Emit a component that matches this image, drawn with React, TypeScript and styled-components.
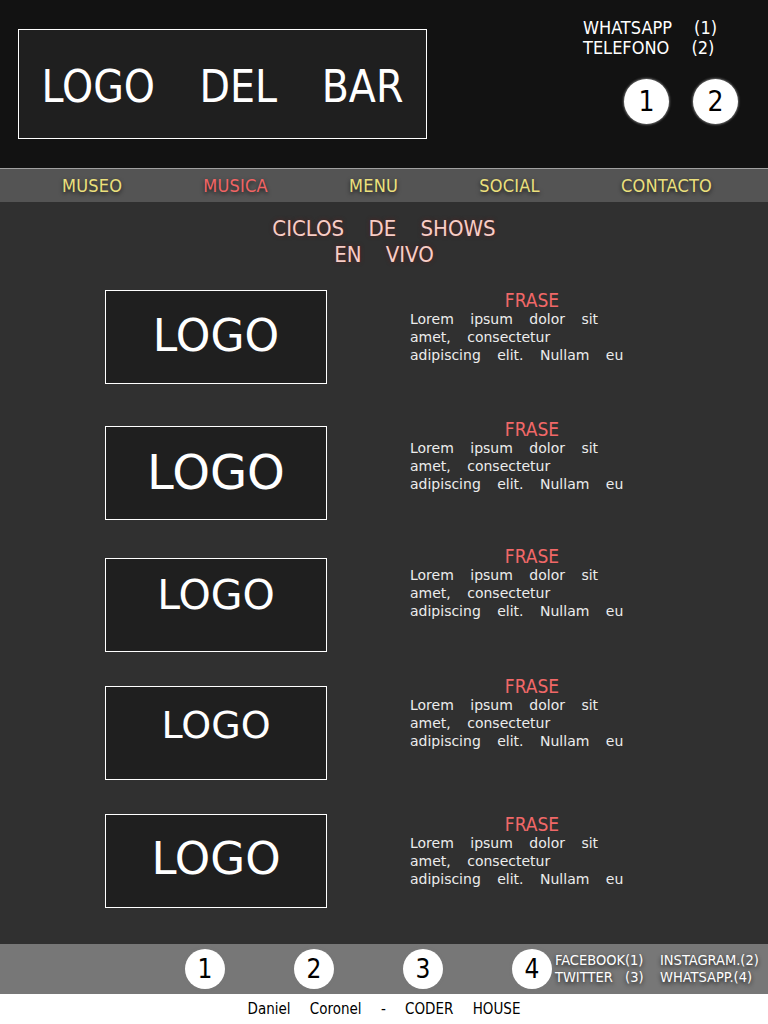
import React from "react";
import styled, { createGlobalStyle } from "styled-components";

const GlobalStyle = createGlobalStyle`
  html, body {
    margin: 0;
    padding: 0;
    background: #ffffff;
  }
  body {
    font-family: "DejaVu Sans Condensed", "DejaVu Sans", sans-serif;
  }
  * {
    box-sizing: border-box;
  }
`;

const Page = styled.div`
  width: 768px;
  display: flex;
  flex-direction: column;
`;

/* header */
const Header = styled.header`
  height: 168px;
  background: #121212;
  display: flex;
  justify-content: space-between;
  align-items: flex-start;
  padding: 0 30px 0 18px;
`;

const BarLogo = styled.div`
  margin-top: 29px;
  width: 409px;
  height: 110px;
  background: #1f1f1f;
  border: 1px solid #ffffff;
  display: flex;
  align-items: center;
  justify-content: center;
  color: #ffffff;
  font-size: 44px;
  word-spacing: 32px;
  padding-top: 4px;
`;

const ContactBox = styled.div`
  width: 155px;
  padding-top: 18px;
  display: flex;
  flex-direction: column;
`;

const ContactLine = styled.div`
  color: #ffffff;
  font-size: 18px;
  line-height: 20px;
  word-spacing: 17px;
`;

const CircleRow = styled.div`
  display: flex;
  justify-content: flex-end;
  gap: 24px;
  margin-top: 21px;
`;

const Circle = styled.div<{ $size: number; $font: number }>`
  width: ${(p) => p.$size}px;
  height: ${(p) => p.$size}px;
  border-radius: 50%;
  background: #ffffff;
  color: #000000;
  display: flex;
  align-items: center;
  justify-content: center;
  font-size: ${(p) => p.$font}px;
  box-shadow: 0 0 2px 1px rgba(120, 120, 120, 0.8);
`;

/* nav */
const Nav = styled.nav`
  height: 34px;
  background: #545454;
  border-top: 1px solid #a0a0a0;
  display: flex;
  align-items: center;
  justify-content: space-between;
  padding: 0 56px 0 62px;
`;

const NavItem = styled.a<{ $active?: boolean }>`
  color: ${(p) => (p.$active ? "#f26464" : "#ece07c")};
  font-size: 18px;
  letter-spacing: 0.2px;
  text-decoration: none;
  text-shadow: 0 2px 4px rgba(0, 0, 0, 0.7);
`;

/* main */
const Main = styled.main`
  background: #303030;
  padding: 14px 0 36px;
  display: flex;
  flex-direction: column;
`;

const Title = styled.h1`
  margin: 0;
  text-align: center;
  color: #f8cdc6;
  font-weight: normal;
  font-size: 22px;
  line-height: 26px;
  word-spacing: 18px;
  text-shadow: 0 0 4px rgba(90, 30, 30, 0.9);
`;

const Shows = styled.div`
  display: flex;
  flex-direction: column;
  margin-top: 22px;
`;

const ShowRow = styled.div<{ $top: number }>`
  display: flex;
  align-items: flex-start;
  margin-top: ${(p) => p.$top}px;
  padding-left: 105px;
`;

const ShowLogo = styled.div<{ $size: number; $shift: number }>`
  width: 222px;
  height: 94px;
  background: #1f1f1f;
  border: 1px solid #ffffff;
  display: flex;
  align-items: center;
  justify-content: center;
  color: #ffffff;
  font-family: "DejaVu Sans", sans-serif;
  font-size: ${(p) => p.$size}px;
  padding-bottom: ${(p) => p.$shift}px;
`;

const ShowText = styled.div<{ $top: number }>`
  margin-left: 83px;
  margin-top: ${(p) => p.$top}px;
  width: 244px;
  display: flex;
  flex-direction: column;
`;

const Phrase = styled.div`
  text-align: center;
  color: #f06868;
  font-size: 19px;
  line-height: 20px;
`;

const Lorem = styled.div`
  font-family: "DejaVu Sans", sans-serif;
  color: #ececec;
  font-size: 14px;
  line-height: 18px;
  word-spacing: 12px;
  white-space: nowrap;
`;

/* footer */
const Footer = styled.footer`
  height: 50px;
  background: #777777;
  display: flex;
  align-items: center;
  padding-left: 185px;
`;

const FooterCircles = styled.div`
  display: flex;
  gap: 69px;
`;

const Socials = styled.div`
  margin-left: 3px;
  display: grid;
  grid-template-columns: 92px auto;
  column-gap: 13px;
  color: #ffffff;
  font-size: 14.5px;
  line-height: 17px;
  text-shadow: 0 2px 4px rgba(0, 0, 0, 0.8);
  margin-top: -1px;
`;

const Social = styled.span`
  white-space: pre;
`;

const Credits = styled.div`
  height: 30px;
  background: #ffffff;
  color: #000000;
  display: flex;
  align-items: center;
  justify-content: center;
  font-size: 15px;
  word-spacing: 15px;
`;

const shows = [
  { top: 0, logo: 44, shift: 4, text: 0 },
  { top: 42, logo: 48, shift: 2, text: -7 },
  { top: 38, logo: 41, shift: 20, text: -12 },
  { top: 34, logo: 38, shift: 16, text: -10 },
  { top: 34, logo: 45, shift: 6, text: 0 },
];

const App = () => {
  return (
    <Page>
      <GlobalStyle />
      <Header>
        <BarLogo>LOGO DEL BAR</BarLogo>
        <ContactBox>
          <ContactLine>WHATSAPP (1)</ContactLine>
          <ContactLine>TELEFONO (2)</ContactLine>
          <CircleRow>
            <Circle $size={45} $font={28}>1</Circle>
            <Circle $size={45} $font={28}>2</Circle>
          </CircleRow>
        </ContactBox>
      </Header>
      <Nav>
        <NavItem>MUSEO</NavItem>
        <NavItem $active>MUSICA</NavItem>
        <NavItem>MENU</NavItem>
        <NavItem>SOCIAL</NavItem>
        <NavItem>CONTACTO</NavItem>
      </Nav>
      <Main>
        <Title>
          CICLOS DE SHOWS
          <br />
          EN VIVO
        </Title>
        <Shows>
          {shows.map((s, i) => (
            <ShowRow key={i} $top={s.top}>
              <ShowLogo $size={s.logo} $shift={s.shift}>
                LOGO
              </ShowLogo>
              <ShowText $top={s.text}>
                <Phrase>FRASE</Phrase>
                <Lorem>Lorem ipsum dolor sit</Lorem>
                <Lorem>amet, consectetur</Lorem>
                <Lorem>adipiscing elit. Nullam eu</Lorem>
              </ShowText>
            </ShowRow>
          ))}
        </Shows>
      </Main>
      <Footer>
        <FooterCircles>
          <Circle $size={40} $font={26}>1</Circle>
          <Circle $size={40} $font={26}>2</Circle>
          <Circle $size={40} $font={26}>3</Circle>
          <Circle $size={40} $font={26}>4</Circle>
        </FooterCircles>
        <Socials>
          <Social>FACEBOOK(1)</Social>
          <Social>INSTAGRAM.(2)</Social>
          <Social>{"TWITTER   (3)"}</Social>
          <Social>WHATSAPP.(4)</Social>
        </Socials>
      </Footer>
      <Credits>Daniel Coronel - CODER HOUSE</Credits>
    </Page>
  );
};

export default App;
